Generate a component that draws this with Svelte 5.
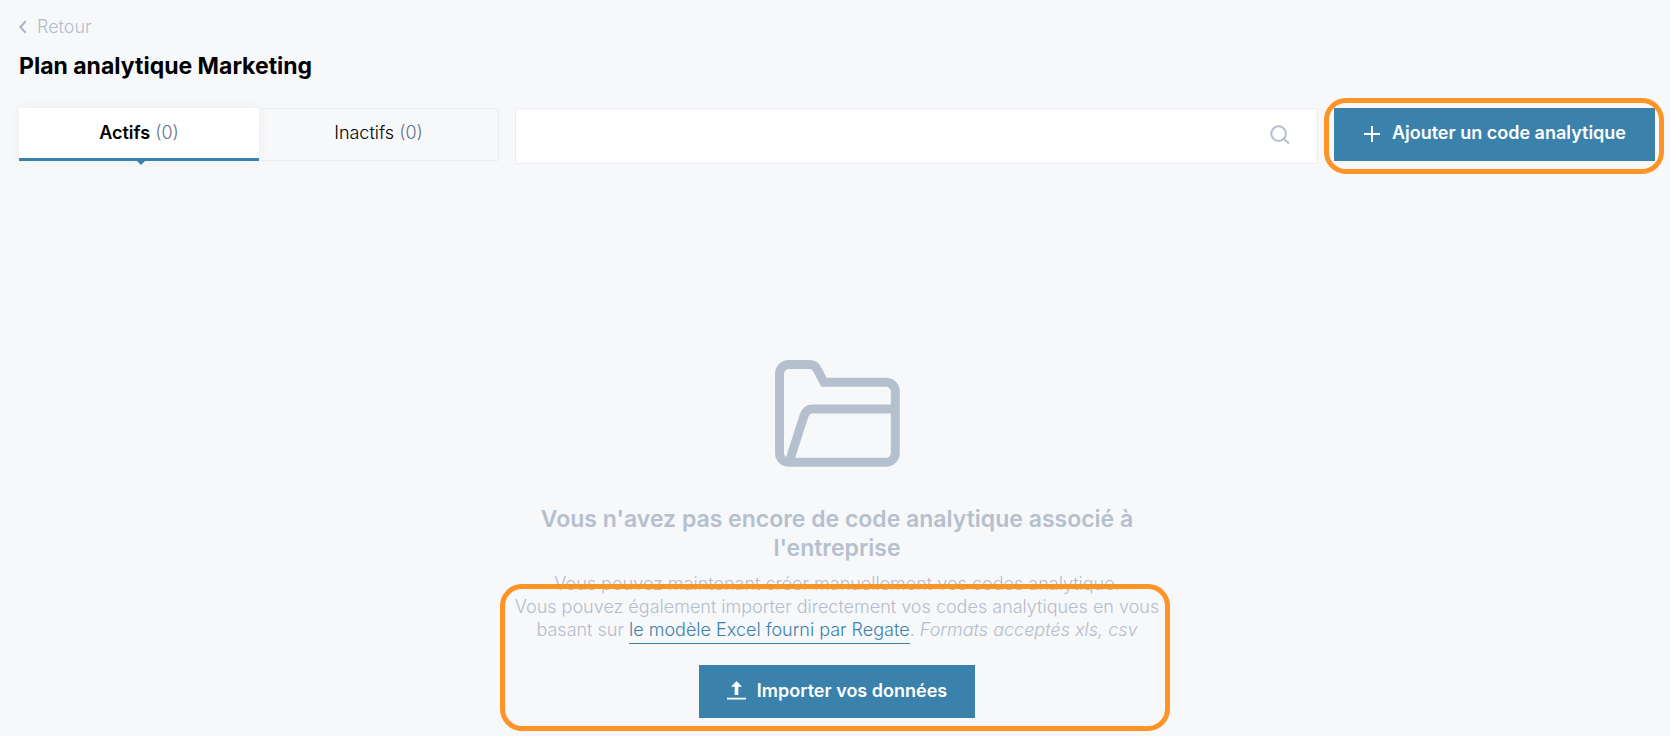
<script>
  let tab = $state('actifs');
  let query = $state('');
  const tabs = [
    { id: 'actifs', label: 'Actifs', count: 0 },
    { id: 'inactifs', label: 'Inactifs', count: 0 }
  ];
</script>

<main class="page">
  <header>
    <a class="back" href="#retour">
      <svg width="8" height="14" viewBox="0 0 8 14" aria-hidden="true"><path d="M6.7 1.2 1.3 7l5.4 5.8" /></svg>
      <span>Retour</span>
    </a>
    <h1>Plan analytique Marketing</h1>
  </header>

  <div class="toolbar">
    <div class="tabs" role="tablist">
      {#each tabs as t (t.id)}
        <button class="tab" class:active={tab === t.id} role="tab" aria-selected={tab === t.id} onclick={() => (tab = t.id)}>
          <span class="name">{t.label}</span> <span class="count">({t.count})</span>
        </button>
      {/each}
    </div>

    <label class="search">
      <input type="search" aria-label="Rechercher" bind:value={query} />
      <svg width="20" height="20" viewBox="0 0 20 20" aria-hidden="true">
        <circle cx="8.6" cy="8.6" r="7.3" /><path d="m14 14 5 4.6" />
      </svg>
    </label>

    <div class="add">
      <button class="primary">
        <svg width="18" height="18" viewBox="0 0 18 18" aria-hidden="true"><path class="line" d="M9 1v16M1 9h16" /></svg>
        <span>Ajouter un code analytique</span>
      </button>
      <div class="ring"></div>
    </div>
  </div>

  <section class="empty">
    <svg class="folder" width="125" height="107" viewBox="0 0 125 107" aria-hidden="true">
      <path d="M4.500 50V13.800a9.300 9.300 0 0 1 9.300-9.300h21c3.200 0 5.500 1.600 7 4.200l7.200 13.600H111a9.300 9.300 0 0 1 9.300 9.300V93a9.300 9.300 0 0 1-9.300 9.300H13.800A9.300 9.300 0 0 1 4.500 93z" />
      <path d="M120 48.900H37.500c-4 0-7 2.600-8.400 6.600L14.500 101" />
    </svg>
    <h2>Vous n'avez pas encore de code analytique associé à l'entreprise</h2>
    <div class="import">
      <p>
        Vous pouvez maintenant créer manuellement vos codes analytique.<br />
        Vous pouvez également importer directement vos codes analytiques en vous<br />
        basant sur <a href="#modele">le modèle Excel fourni par Regate</a>. <em>Formats acceptés xls, csv</em>
      </p>
      <button class="primary">
        <svg width="19" height="20" viewBox="0 0 19 20" aria-hidden="true">
          <path class="fill" d="M9.500 0 15 5.800h-3.700V14H7.700V5.800H4zM0 16.800h19v1.800H0z" />
        </svg>
        <span>Importer vos données</span>
      </button>
      <div class="ring"></div>
    </div>
  </section>
</main>

<style>
  :global(body) {
    margin: 0;
    background: #f7f8fa;
  }
  .page {
    box-sizing: border-box;
    min-height: 100vh;
    padding: 16px 15px 18px 19px;
    overflow: hidden;
    font-family: Inter, "Liberation Sans", sans-serif;
    font-size: 18px;
    font-weight: 300;
    color: #000;
  }
  button, input {
    font: inherit;
    color: inherit;
    margin: 0;
    border: 0;
    border-radius: 0;
  }
  button { cursor: pointer; }
  svg {
    flex: none;
    fill: none;
    stroke: #b5c0ce;
    stroke-width: 2;
  }
  .back {
    display: inline-flex;
    align-items: center;
    gap: 10px;
    line-height: 22px;
    color: #b5bccb;
    text-decoration: none;
  }
  .back svg { stroke: #a9b5c5; }
  h1 {
    margin: 13px 0 27px;
    font-size: 23px;
    line-height: 30px;
    font-weight: 700;
  }
  .toolbar {
    display: grid;
    grid-template-columns: 480px minmax(0, 1fr) auto;
    gap: 16px;
    align-items: start;
  }
  .tabs {
    display: grid;
    grid-template-columns: 1fr 1fr;
  }
  .tab {
    position: relative;
    box-sizing: border-box;
    height: 53px;
    padding: 0 0 4px;
    border: 1px solid #e9ebf5;
    border-left: 0;
    border-radius: 2px;
    background: transparent;
  }
  .tab.active {
    padding-bottom: 2px;
    border: 0;
    border-bottom: 3px solid #3a82ac;
    border-radius: 2px 2px 0 0;
    background: #fff;
    box-shadow: 0 0 12px rgba(40, 60, 90, 0.06);
  }
  .tab.active .name { font-weight: 600; }
  .tab.active::after {
    content: "";
    position: absolute;
    top: 100%;
    left: 50%;
    margin: 2px 0 0 -3px;
    border: 5px solid transparent;
    border-top-color: #3a82ac;
    border-bottom: 0;
  }
  .count { color: #66758a; }
  .search {
    display: flex;
    align-items: center;
    box-sizing: border-box;
    height: 56px;
    padding: 0 27px 2px 20px;
    border: 1px solid #e9ebf5;
    border-radius: 2px;
    background: #fff;
  }
  .search input {
    flex: 1;
    min-width: 0;
    outline: 0;
    background: none;
  }
  .primary {
    display: inline-flex;
    align-items: center;
    gap: 11px;
    height: 53px;
    padding: 0 28px 1px;
    background: #3a82ac;
    color: #fff;
    font-weight: 600;
    white-space: nowrap;
  }
  .primary span { padding-bottom: 2px; }
  .primary .line { stroke: #fff; }
  .primary .fill { fill: #fff; stroke: none; }
  .add, .import { position: relative; }
  .add .primary {
    display: flex;
    padding: 0 29px 2px;
  }
  .ring {
    position: absolute;
    inset: -10px -9px -13px -10px;
    border: 5px solid #ff9326;
    border-radius: 22px;
    pointer-events: none;
  }
  .empty {
    display: flex;
    flex-direction: column;
    align-items: center;
    padding-top: 196px;
    text-align: center;
    color: #b5bccb;
  }
  .folder { stroke-width: 9; }
  h2 {
    max-width: 640px;
    margin: 38px 0 9px;
    font-size: 23px;
    line-height: 29px;
    font-weight: 600;
    color: #b5c0ce;
  }
  .import {
    width: 100%;
    max-width: 660px;
  }
  p {
    margin: 0 0 24px;
    line-height: 23px;
    white-space: nowrap;
  }
  p a {
    padding-bottom: 3px;
    color: #3a82ac;
    text-decoration: none;
    border-bottom: 1px solid #3a82ac;
  }
  .import .ring { inset: 12px -3px -13px -7px; }
</style>
